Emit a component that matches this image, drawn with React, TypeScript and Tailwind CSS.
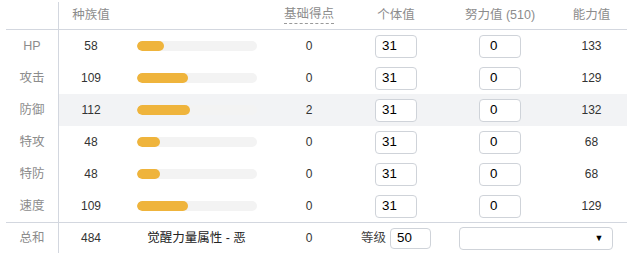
import React from "react";

const stats = [
  { label: "HP", base: 58, ev: 0, iv: 31, evv: 0, val: 133 },
  { label: "攻击", base: 109, ev: 0, iv: 31, evv: 0, val: 129 },
  { label: "防御", base: 112, ev: 2, iv: 31, evv: 0, val: 132, hl: true },
  { label: "特攻", base: 48, ev: 0, iv: 31, evv: 0, val: 68 },
  { label: "特防", base: 48, ev: 0, iv: 31, evv: 0, val: 68 },
  { label: "速度", base: 109, ev: 0, iv: 31, evv: 0, val: 129 },
];

const font = { fontFamily: '"Liberation Sans", "Noto Sans CJK SC", sans-serif' };

export default function App() {
  return (
    <div className="w-[642px] h-[261px] bg-white text-[12px] leading-[16px] text-[#333]" style={font}>
      <div className="ml-[6px] w-[621px]">
        {/* header */}
        <div className="flex h-[30px] border-b border-[#d3d7df] text-[#8c8c8c] text-[12.5px]">
          <div className="w-[53px] border-r border-[#d3d7df] mt-[2px]"></div>
          <div className="w-[64px] flex items-center justify-center">种族值</div>
          <div className="w-[147px]"></div>
          <div className="w-[78px] flex items-center justify-center">
            <span className="border-b border-dashed border-[#999] leading-[17px] mt-[1px]">基础得点</span>
          </div>
          <div className="w-[96px] flex items-center justify-center">个体值</div>
          <div className="w-[112px] flex items-center justify-center">努力值 (510)</div>
          <div className="w-[71px] flex items-center justify-center">能力值</div>
        </div>
        {stats.map((s) => (
          <div key={s.label} className="flex h-[32px]">
            <div className="w-[53px] border-r border-[#d3d7df] flex items-center justify-center text-[#8c8c8c] text-[12.5px]">
              {s.label}
            </div>
            <div className={`flex flex-1 ${s.hl ? "bg-[#f2f3f5]" : ""}`}>
              <div className="w-[64px] flex items-center justify-center">{s.base}</div>
              <div className="w-[147px] flex items-center pl-[14px]">
                <div className="w-[120px] h-[10px] rounded-full bg-[#f3f3f3] overflow-hidden">
                  <div
                    className="h-full rounded-full bg-[#efb43c]"
                    style={{ width: `${(s.base / 255) * 120}px` }}
                  ></div>
                </div>
              </div>
              <div className="w-[78px] flex items-center justify-center">{s.ev}</div>
              <div className="w-[96px] flex items-center justify-center">
                <div className="w-[42px] h-[23px] border border-[#cfd3d9] rounded-[4px] bg-white flex items-center pl-[6px] text-[13.33px] text-black">
                  {s.iv}
                </div>
              </div>
              <div className="w-[112px] flex items-center justify-center">
                <div className="w-[42px] h-[23px] border border-[#cfd3d9] rounded-[4px] bg-white flex items-center pl-[10px] text-[13.33px] text-black">
                  {s.evv}
                </div>
              </div>
              <div className="w-[71px] flex items-center justify-center">{s.val}</div>
            </div>
          </div>
        ))}
        {/* footer */}
        <div className="flex h-[35px] border-t border-[#d3d7df]">
          <div className="w-[53px] border-r border-[#d3d7df] flex items-center justify-center text-[#8c8c8c] text-[12.5px] mb-[4px]">
            总和
          </div>
          <div className="w-[64px] flex items-center justify-center pb-[4px]">484</div>
          <div className="w-[147px] flex items-center justify-center pb-[4px] text-[12.5px] text-[#222]">觉醒力量属性 - 恶</div>
          <div className="w-[78px] flex items-center justify-center pb-[4px]">0</div>
          <div className="w-[96px] flex items-center justify-center gap-[4px] pb-[4px]">
            <span className="text-[12.5px] text-[#444]">等级</span>
            <div className="w-[41px] h-[21px] border border-[#cfd3d9] rounded-[4px] bg-white flex items-center pl-[6px] text-[13.33px] text-black">
              50
            </div>
          </div>
          <div className="w-[183px] flex items-center justify-center pb-[4px]">
            <div className="w-[154px] h-[23px] border border-[#cfd3d9] rounded-[4px] bg-white flex items-center justify-end pr-[8px]">
              <span className="text-[9px] text-black leading-none">▼</span>
            </div>
          </div>
        </div>
      </div>
    </div>
  );
}
